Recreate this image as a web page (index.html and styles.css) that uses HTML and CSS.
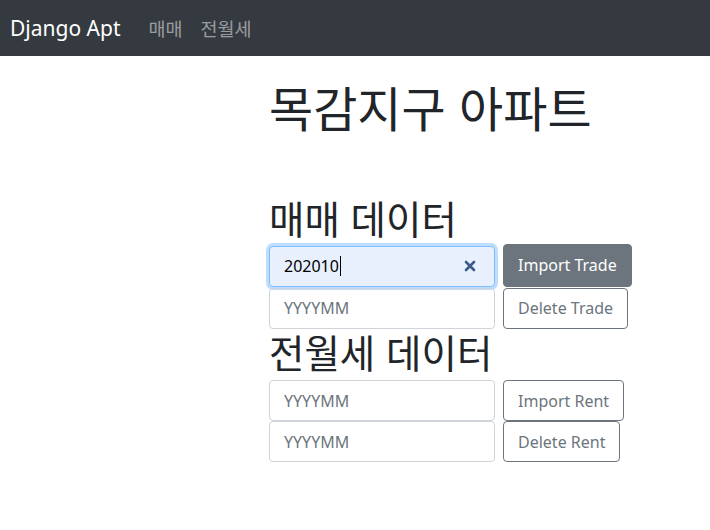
FILE: index.html
```html
<!DOCTYPE html>
<html lang="ko">
<head>
<meta charset="utf-8">
<title>Django Apt</title>
<link rel="stylesheet" href="styles.css">
</head>
<body>
<nav class="navbar">
  <a class="brand" href="#">Django Apt</a>
  <a class="nav-link" href="#">매매</a>
  <a class="nav-link" href="#">전월세</a>
</nav>
<main class="content">
  <h1 class="title">목감지구 아파트</h1>
  <section class="block block-trade">
    <h2 class="subtitle">매매 데이터</h2>
    <div class="form-row">
      <div class="field field-focus">
        <span class="value">202010</span><span class="caret"></span>
        <svg class="clear" width="12" height="12" viewBox="0 0 12 12"><path d="M2 2 L10 10 M10 2 L2 10" stroke="#3c5a8a" stroke-width="2.6" stroke-linecap="round"/></svg>
      </div>
      <button class="btn btn-filled">Import Trade</button>
    </div>
    <div class="form-row">
      <div class="field"><span class="placeholder">YYYYMM</span></div>
      <button class="btn">Delete Trade</button>
    </div>
  </section>
  <section class="block block-rent">
    <h2 class="subtitle">전월세 데이터</h2>
    <div class="form-row">
      <div class="field"><span class="placeholder">YYYYMM</span></div>
      <button class="btn">Import Rent</button>
    </div>
    <div class="form-row">
      <div class="field"><span class="placeholder">YYYYMM</span></div>
      <button class="btn">Delete Rent</button>
    </div>
  </section>
</main>
</body>
</html>
```
FILE: styles.css
```css
* { box-sizing: border-box; }
body {
  margin: 0;
  font-family: "Noto Sans", "Noto Sans CJK KR", sans-serif;
  color: #212529;
  background: #fff;
}
.navbar {
  height: 56px;
  background: #343a40;
  display: flex;
  align-items: center;
  padding: 0 10px;
}
.brand {
  color: #fff;
  font-size: 21px;
  text-decoration: none;
  margin-right: 19px;
  font-family: "Noto Sans", sans-serif;
}
.nav-link {
  color: rgba(255,255,255,.5);
  font-family: "Noto Sans CJK KR", sans-serif;
  font-size: 18.5px;
  text-decoration: none;
  padding: 0 9px;
}
.content {
  margin-left: 269px;
  padding-top: 22px;
}
.title {
  font-family: "Noto Sans CJK KR", sans-serif;
  font-weight: 400;
  font-size: 48px;
  line-height: 1.2;
  margin: 0 0 60px;
}
.subtitle {
  font-family: "Noto Sans CJK KR", sans-serif;
  font-weight: 400;
  font-size: 38.5px;
  line-height: 1.1;
  margin: 0 0 6px;
}
.form-row {
  display: flex;
  gap: 8px;
  margin-bottom: 1px;
  align-items: flex-end;
}
.field {
  width: 226px;
  height: 41px;
  border: 1px solid #ced4da;
  border-radius: 4px;
  padding: 0 14px;
  display: flex;
  align-items: center;
  font-size: 16px;
  font-family: "Noto Sans", sans-serif;
}
.placeholder { color: #6c757d; }
.field-focus {
  background: #e8f0fe;
  border-color: #80bdff;
  box-shadow: 0 0 0 3px rgba(0,123,255,.25);
}
.value { color: #000; }
.caret {
  width: 1px;
  height: 20px;
  background: #000;
  margin-left: 1px;
}
.clear { margin-left: auto; margin-right: 4px; }
.btn {
  height: 41px;
  padding: 0 14px;
  border: 1px solid #6c757d;
  border-radius: 4px;
  background: #fff;
  color: #6c757d;
  font-size: 16px;
  font-family: "Noto Sans", sans-serif;
}
.btn-filled {
  background: #6c757d;
  color: #fff;
  height: 43px;
}
.block-rent .subtitle { margin-bottom: 8px; }
.block-rent .form-row { margin-bottom: 0; }
```
